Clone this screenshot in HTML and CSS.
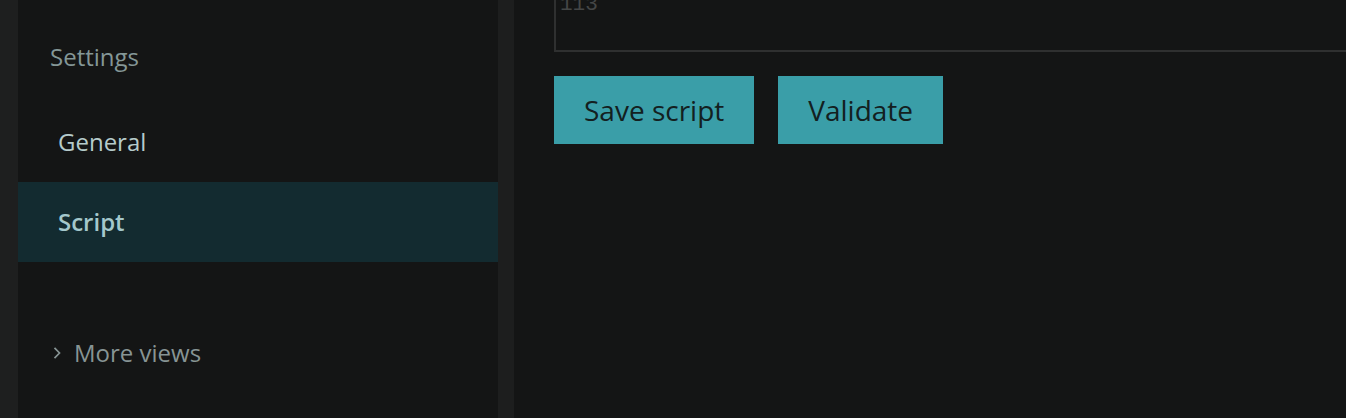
FILE: index.html
```html
<!DOCTYPE html>
<html lang="en">
<head>
<meta charset="utf-8">
<title>Settings - Script</title>
<link rel="stylesheet" href="styles.css">
</head>
<body>
<div class="app">
  <div class="edge"></div>
  <aside class="sidebar">
    <div class="sidebar-title">Settings</div>
    <nav class="nav">
      <a class="nav-item">General</a>
      <a class="nav-item active">Script</a>
    </nav>
    <div class="more">
      <svg class="chev" width="10" height="14" viewBox="0 0 10 14"><path d="M2.5 1.8 L7.5 7 L2.5 12.2" fill="none" stroke="currentColor" stroke-width="1.7"/></svg>
      <span>More views</span>
    </div>
  </aside>
  <div class="gutter"></div>
  <main class="main">
    <div class="code">
      <div class="line">112</div>
      <div class="line">113</div>
    </div>
    <div class="actions">
      <button class="btn">Save script</button>
      <button class="btn">Validate</button>
    </div>
  </main>
</div>
</body>
</html>
```

FILE: styles.css
```css
* { box-sizing: border-box; }
html, body { margin: 0; height: 100%; }
body {
  background: #1e1f1f;
  font-family: "Open Sans", "Noto Sans", sans-serif;
  overflow: hidden;
}
.app {
  display: flex;
  height: 418px;
}
.edge { width: 18px; background: #1e1f1f; flex: none; }
.sidebar {
  width: 480px;
  flex: none;
  background: #141515;
  display: flex;
  flex-direction: column;
}
.sidebar-title {
  padding: 41px 0 0 32px;
  font-size: 24px;
  line-height: 32px;
  height: 102px;
  color: #849797;
}
.nav { display: flex; flex-direction: column; }
.nav-item {
  height: 80px;
  display: flex;
  align-items: center;
  padding-left: 40px;
  padding-bottom: 2px;
  font-size: 24px;
  color: #b6cbcb;
}
.nav-item.active {
  background: #132b30;
  color: #a4c8cc;
  font-weight: 600;
}
.more {
  margin-top: 75px;
  display: flex;
  align-items: center;
  gap: 12px;
  padding-left: 34px;
  font-size: 24px;
  line-height: 32px;
  color: #879494;
}
.chev { color: #879494; flex: none; }
.gutter { width: 16px; flex: none; background: #1d1e1e; }
.main {
  flex: 1;
  background: #141515;
  padding-left: 40px;
  min-width: 0;
}
.code {
  margin-top: -60px;
  height: 112px;
  border: 2px solid #2f3030;
  border-top: none;
  border-right: none;
  margin-right: -20px;
  display: flex;
  flex-direction: column;
  justify-content: flex-end;
  padding: 0 0 33px 4px;
  font-family: "Liberation Mono", monospace;
  font-size: 21px;
  line-height: 24px;
  color: #444646;
  overflow: hidden;
}
.actions {
  display: flex;
  gap: 24px;
  margin-top: 24px;
}
.btn {
  height: 68px;
  padding: 0 30px;
  border: none;
  background: #3a9ea8;
  color: #13201f;
  font-family: "Open Sans", "Noto Sans", sans-serif;
  font-size: 28px;
  cursor: pointer;
}
```
